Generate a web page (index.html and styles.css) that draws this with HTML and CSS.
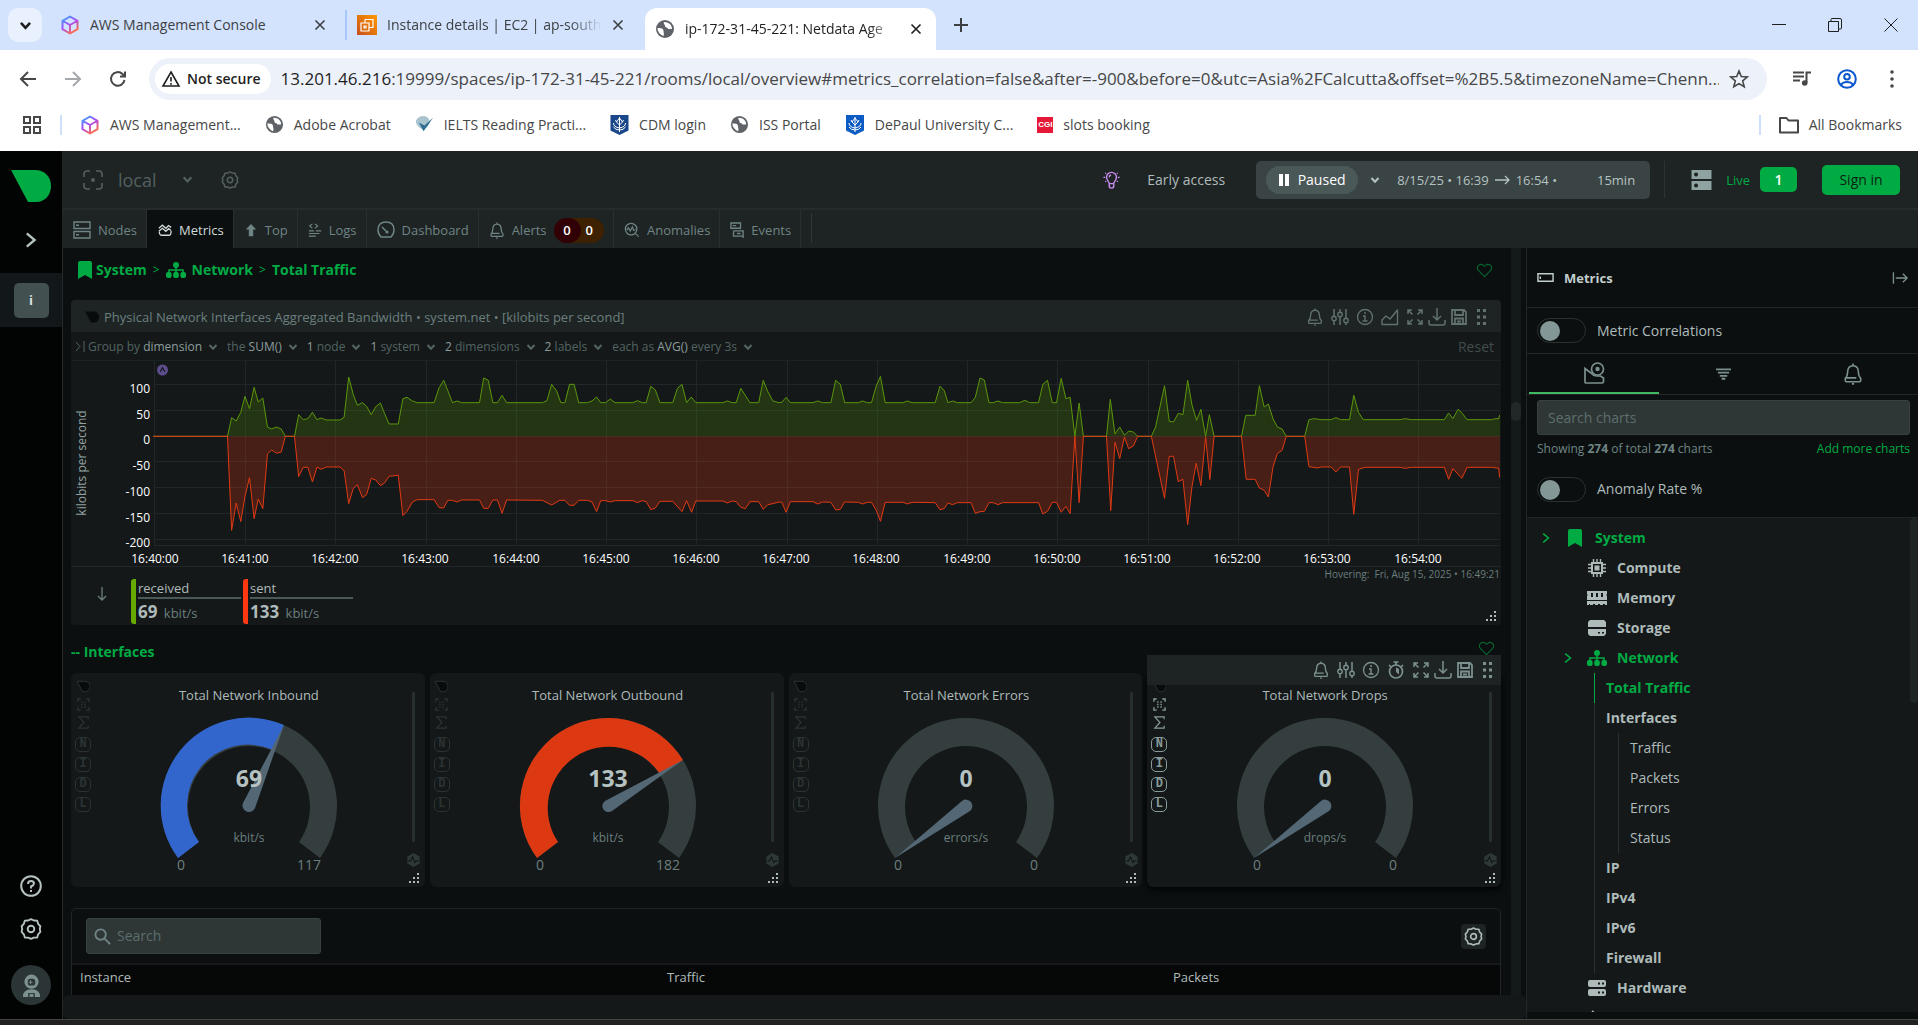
FILE: index.html
```html
<!DOCTYPE html>
<html lang="en">
<head>
<meta charset="utf-8">
<title>ip-172-31-45-221: Netdata Agent</title>
<link rel="stylesheet" href="styles.css">
</head>
<body>
<svg class="sprite" aria-hidden="true">
  <defs>
    <linearGradient id="awsg" x1="0" y1="0" x2="0.6" y2="1"><stop offset="0" stop-color="#2bb8f5"/><stop offset=".5" stop-color="#a44bff"/><stop offset="1" stop-color="#ff6a4d"/></linearGradient>
    <linearGradient id="ec2g" x1="0" y1="1" x2="1" y2="0"><stop offset="0" stop-color="#c8511b"/><stop offset="1" stop-color="#f90"/></linearGradient>
    <symbol id="aws" viewBox="0 0 20 20"><path d="M10 1.5 17.5 5.8v8.4L10 18.5 2.500 14.200V5.800z M3 6l7 4 7-4 M10 10v8" fill="none" stroke="url(#awsg)" stroke-width="2" stroke-linejoin="round"/></symbol>
    <symbol id="ec2" viewBox="0 0 20 20"><path d="M0 0h20v20H0z" fill="url(#ec2g)"/><path d="M4 8h8v8H4zM8 4.500h8v8h-4M8 8V4.500M7 11h2v2H7z" fill="none" stroke="#fff" stroke-width="1.200"/></symbol>
    <symbol id="globe" viewBox="0 0 20 20"><circle cx="10" cy="10" r="9" fill="#5f6368"/><path d="M2.500 9c3 0 6 0 6 3 0 2 1 2 0 5-3-1-6-4-6-8zM9 3c-1 2 1 2 1 4s3 1 3 3h4c0-4-3-7-8-7z" fill="#fff"/></symbol>
    <symbol id="check" viewBox="0 0 20 20"><path d="M1 6c2-6 12-7 14-1s-5 10-7 10S0 10 1 6z" fill="#a9c3cf"/><path d="M4 8l5 9L19 3l-9 8z" fill="#2d6f93"/></symbol>
    <symbol id="crest" viewBox="0 0 18 20"><path d="M0 0h18v15q0 1-2 1.500L9 20l-7-3.500Q0 16 0 15z" fill="currentColor"/><path d="M9 2v15M9 3L6 7l3 3 3-3zM3 8q0 4 6 5 6-1 6-5M3 12q2 3 6 3t6-3M5 5l1 2M13 5l-1 2" fill="none" stroke="#fff" stroke-width="1"/></symbol>
    <symbol id="x" viewBox="0 0 12 12"><path d="M1.500 1.500l9 9M10.500 1.500l-9 9" stroke="currentColor" stroke-width="1.600" fill="none"/></symbol>
    <symbol id="down" viewBox="0 0 10 10"><path d="M1.500 3L5 6.800 8.500 3" fill="none" stroke="currentColor" stroke-width="2"/></symbol>
    <symbol id="right" viewBox="0 0 10 14"><path d="M1.500 1.500L8 7l-6.500 5.500" fill="none" stroke="currentColor" stroke-width="2"/></symbol>
    <symbol id="back" viewBox="0 0 20 20"><path d="M18 10H3M10 3l-7 7 7 7" fill="none" stroke="currentColor" stroke-width="2"/></symbol>
    <symbol id="reload" viewBox="0 0 20 20"><path d="M16.500 11a6.800 6.800 0 1 1-2-6l2 2M17 2.500V7.500h-5" fill="none" stroke="currentColor" stroke-width="2"/></symbol>
    <symbol id="warn" viewBox="0 0 20 20"><path d="M10 3l8 14H2zM10 8v4.500M10 14v1.700" fill="none" stroke="currentColor" stroke-width="1.600"/></symbol>
    <symbol id="star" viewBox="0 0 20 20"><path d="M10 2l2.300 5.500 6 .5-4.600 3.900 1.500 5.900L10 14.600l-5.200 3.200 1.500-5.900L1.700 8l6-.5z" fill="none" stroke="currentColor" stroke-width="1.600"/></symbol>
    <symbol id="queue" viewBox="0 0 20 20"><path d="M1 3.500h11M1 7.500h11M1 11.500h7M14.500 14V3.500H19" fill="none" stroke="currentColor" stroke-width="2"/><circle cx="12.700" cy="14" r="2.800" fill="currentColor"/></symbol>
    <symbol id="user" viewBox="0 0 20 20"><circle cx="10" cy="10" r="8.800" fill="none" stroke="currentColor" stroke-width="2"/><circle cx="10" cy="7.800" r="2.800" fill="none" stroke="currentColor" stroke-width="2"/><path d="M4 16c2-4 10-4 12 0" fill="none" stroke="currentColor" stroke-width="2"/></symbol>
    <symbol id="more" viewBox="0 0 20 20"><circle cx="10" cy="3" r="1.800"/><circle cx="10" cy="10" r="1.800"/><circle cx="10" cy="17" r="1.800"/></symbol>
    <symbol id="apps" viewBox="0 0 20 20"><path d="M2 2h6v6H2zM12 2h6v6h-6zM2 12h6v6H2zM12 12h6v6h-6z" fill="none" stroke="currentColor" stroke-width="2"/></symbol>
    <symbol id="folder" viewBox="0 0 20 18"><path d="M1 2h6.500l2 2.500H19V16.500H1z" fill="none" stroke="currentColor" stroke-width="2" stroke-linejoin="round"/></symbol>
    <symbol id="leaf" viewBox="0 0 40 32"><path d="M0 0h24c10 0 16 7 16 16s-6 16-15 16h-8z"/></symbol>
    <symbol id="space" viewBox="0 0 20 20"><path d="M1 7V4q0-3 3-3h3M13 1h3q3 0 3 3v3M19 13v3q0 3-3 3h-3M7 19H4q-3 0-3-3v-3" fill="none" stroke="currentColor" stroke-width="1.600"/><circle cx="10" cy="10" r="2"/></symbol>
    <symbol id="gear" viewBox="0 0 20 20"><path d="M10 1l2.600 1.300 3 .1.900 2.900 2 2.200L18 10l.5 2.600-2 2.200-.9 2.900-3 .1L10 19l-2.600-1.200-3-.1-.9-2.900-2-2.200L2 10l-.5-2.500 2-2.200.9-2.900 3-.1z" fill="none" stroke="currentColor" stroke-width="1.700" stroke-linejoin="round"/><circle cx="10" cy="10" r="3" fill="none" stroke="currentColor" stroke-width="1.700"/></symbol>
    <symbol id="nodes" viewBox="0 0 18 18"><path d="M1 1h16v6.500H1zM1 10.500h16V17H1zM3 4.300h3M3 13.800h3" fill="none" stroke="currentColor" stroke-width="1.400"/></symbol>
    <symbol id="waves" viewBox="0 0 16 16"><path d="M1 6l4-3.500L9 6l3-3 3 2M1 9.500L5 6l4 3.500 3-3 3 2M1.500 10q0 4 3 4h8q2.500 0 2.500-5" fill="none" stroke="currentColor" stroke-width="1.500"/></symbol>
    <symbol id="up" viewBox="0 0 16 16"><path d="M8 1l6 6.500h-3.500V15h-5V7.500H2z"/></symbol>
    <symbol id="logs" viewBox="0 0 16 16"><path d="M5 1L2 3.500 5 6M8 1l3 2.500L8 6M1 9h6M9 9h6M1 12h12M1 15h8" fill="none" stroke="currentColor" stroke-width="1.300"/></symbol>
    <symbol id="dash" viewBox="0 0 18 18"><path d="M4 16q-3-3-3-7 0-8 8-8t8 8q0 4-3 7zM5 6l4 4" fill="none" stroke="currentColor" stroke-width="1.500"/><circle cx="10" cy="11" r="1.600"/></symbol>
    <symbol id="bell" viewBox="0 0 18 20"><path d="M9 2.500c-4 0-5 3.500-5 6.500 0 2-.5 3.500-2 5V16q0 1 1 1h12q1 0 1-1v-2c-1.500-1.500-2-3-2-5 0-3-1-6.500-5-6.500zM9 2.500V.5M2.500 13.500H12M8 19h2" fill="none" stroke="currentColor" stroke-width="1.500"/></symbol>
    <symbol id="anom" viewBox="0 0 18 18"><circle cx="8" cy="8" r="6.500" fill="none" stroke="currentColor" stroke-width="1.400"/><path d="M12.500 12.500l4 4M3 9l2-2.500L7 10l2.500-4.500 1.500 4 2-1" fill="none" stroke="currentColor" stroke-width="1.400"/></symbol>
    <symbol id="events" viewBox="0 0 16 18"><path d="M1 1h11v6H1zM3 8V7M4 10h11v6.500M4 10v6h11v2M3 4h4M8 13h4" fill="none" stroke="currentColor" stroke-width="1.500"/></symbol>
    <symbol id="bulb" viewBox="0 0 18 20"><path d="M6.500 14c0-2-3-3.500-3-7a5.500 5.500 0 0 1 11 0c0 3.500-3 5-3 7zM6.500 14v3q0 2 2.500 2t2.500-2v-3M6.500 7q0-2 2-2.500" fill="none" stroke="currentColor" stroke-width="1.600"/><path d="M0 7h2M16 7h2M2 2l1 1M16 2l-1 1M2 12l1-1M16 12l-1-1" stroke="currentColor" stroke-width="1.300"/></symbol>
    <symbol id="server" viewBox="0 0 20 20"><path fill-rule="evenodd" d="M0 0h20v9H0zM4.500 2.500a2 2 0 1 0 .1 0zM0 11h20v9H0zM4.500 13.500a2 2 0 1 0 .1 0z"/></symbol>
    <symbol id="mark" viewBox="0 0 14 18"><path d="M2 0h10q2 0 2 2v16l-7-4-7 4V2q0-2 2-2z"/></symbol>
    <symbol id="net" viewBox="0 0 20 16"><circle cx="10" cy="3" r="3"/><rect x="0" y="10" width="5.600" height="6" rx="2"/><rect x="7.200" y="10" width="5.600" height="6" rx="2"/><rect x="14.400" y="10" width="5.600" height="6" rx="2"/><path d="M10 5v6M3 11V8h14v3" fill="none" stroke="currentColor" stroke-width="1.500"/></symbol>
    <symbol id="heart" viewBox="0 0 18 16"><path d="M9 14.500L2.500 8C-.5 4 4 -.5 8 2.500L9 3.500l1-1C14-.5 18.500 4 15.500 8z" fill="none" stroke="currentColor" stroke-width="1.200"/></symbol>
    <symbol id="sliders" viewBox="0 0 18 18"><path d="M3 1v7M3 13v4M9 1v3M9 9v8M15 1v9M15 15v2" fill="none" stroke="currentColor" stroke-width="1.500"/><circle cx="3" cy="10.500" r="2.200" fill="none" stroke="currentColor" stroke-width="1.400"/><circle cx="9" cy="6.500" r="2.200" fill="none" stroke="currentColor" stroke-width="1.400"/><circle cx="15" cy="12.500" r="2.200" fill="none" stroke="currentColor" stroke-width="1.400"/></symbol>
    <symbol id="info" viewBox="0 0 18 18"><circle cx="9" cy="9" r="7.500" fill="none" stroke="currentColor" stroke-width="1.300"/><path d="M9 4v2M7 8h2v5M6.500 13h5" fill="none" stroke="currentColor" stroke-width="1.400"/></symbol>
    <symbol id="area" viewBox="0 0 18 18"><path d="M1 16.500V12l4-4 4 3 7.500-9v14.500z" fill="none" stroke="currentColor" stroke-width="1.400" stroke-linejoin="round"/></symbol>
    <symbol id="timer" viewBox="0 0 18 18"><circle cx="9" cy="10.500" r="6.500" fill="none" stroke="currentColor" stroke-width="1.700"/><path d="M9 6.500v4.500l3 2.500V8z"/><path d="M6.500 1h5M9 1v3M2 4l2 2M16 4l-2 2" stroke="currentColor" stroke-width="1.700"/></symbol>
    <symbol id="full" viewBox="0 0 18 18"><path d="M2 6V2h4M12 2h4v4M16 12v4h-4M6 16H2v-4M2 2l4.500 4.500M16 2l-4.500 4.500M16 16l-4.500-4.500M2 16l4.500-4.500" fill="none" stroke="currentColor" stroke-width="1.500"/></symbol>
    <symbol id="dl" viewBox="0 0 18 18"><path d="M9 0v12M5 8l4 4 4-4M1 12v3q0 2 2 2h12q2 0 2-2v-3" fill="none" stroke="currentColor" stroke-width="1.500"/></symbol>
    <symbol id="save" viewBox="0 0 18 18"><path d="M2 2h12l2 2v12H2zM5 2v5h8V2M5 16v-5.500h8V16M7 13.500h4" fill="none" stroke="currentColor" stroke-width="1.800"/></symbol>
    <symbol id="grip" viewBox="0 0 18 18"><path d="M5 1h3v3H5zM11 1h3v3h-3zM5 7.500h3v3H5zM11 7.500h3v3h-3zM5 14h3v3H5zM11 14h3v3h-3z"/></symbol>
    <symbol id="size" viewBox="0 0 12 12"><path d="M9 0h2v2H9zM9 4h2v2H9zM9 8h2v2H9zM5 4h2v2H5zM5 8h2v2H5zM1 8h2v2H1z"/></symbol>
    <symbol id="scan" viewBox="0 0 14 14"><path d="M1 4V1h3M10 1h3v3M13 10v3h-3M4 13H1v-3" fill="none" stroke="currentColor" stroke-width="1.500"/><path d="M4.500 3.500H6V5H4.500zM8 3.500h1.500V5H8zM4.500 6.300H6v1.500H4.500zM8 6.300h1.500v1.500H8zM4.500 9H6v1.500H4.500zM8 9h1.500v1.500H8z"/></symbol>
    <symbol id="sigma" viewBox="0 0 14 14"><path d="M12 3.500V1H2l5.500 6L2 13h10v-2.500" fill="none" stroke="currentColor" stroke-width="1.300"/></symbol>
    <symbol id="pulse" viewBox="0 0 14 16"><path d="M7 0l7 4v8l-7 4-7-4V4z"/><path d="M1 9h2.500L6 4.500 8.500 11l1.500-2h3" fill="none" stroke="#141819" stroke-width="1.300"/></symbol>
    <symbol id="spot" viewBox="0 0 12 12"><circle cx="6" cy="6" r="6"/><path d="M3.500 8L6 3.500 8.500 8" fill="none" stroke="#141819" stroke-width="1.300"/></symbol>
    <symbol id="panel" viewBox="0 0 18 10"><path d="M1 1h16v8H1zM3.500 4v2.500" fill="none" stroke="currentColor" stroke-width="1.500"/></symbol>
    <symbol id="out" viewBox="0 0 18 14"><path d="M1.500 1v12M4 7h12M11.500 2.500L16 7l-4.500 4.500" fill="none" stroke="currentColor" stroke-width="1.400"/></symbol>
    <symbol id="charts" viewBox="0 0 22 22"><circle cx="14.500" cy="7" r="6" fill="none" stroke="currentColor" stroke-width="1.700"/><circle cx="14.500" cy="7" r="2.200"/><path d="M8 11L2 6.500V20q0 1 1 1h16q1.500 0 1.500-1.500V16l-3-2h-4q-3 0-5.500-3" fill="none" stroke="currentColor" stroke-width="1.700"/></symbol>
    <symbol id="filter" viewBox="0 0 16 12"><path d="M0 0h16v2H0zM2 3.500h12v2H2zM4 7h8v2H4zM6 10h4v2H6z"/></symbol>
    <symbol id="cpu" viewBox="0 0 18 18"><path fill-rule="evenodd" d="M3 3h12v12H3zM5 5v8h8V5z"/><path d="M6.500 6.500h5v5h-5z"/><path d="M5.500 0v3M9 0v3M9 15v3M12.500 0v3M12.500 15v3M5.500 15v3M0 5.500h3M0 9h3M0 12.500h3M15 5.500h3M15 9h3M15 12.500h3" stroke="currentColor" stroke-width="1.400"/></symbol>
    <symbol id="ram" viewBox="0 0 20 14"><path fill-rule="evenodd" d="M0 0h20v3q-1.500 1 0 2v4H0V5q1.500-1 0-2zM4 2v4h2V2zM9 2v4h2V2zM14 2v4h2V2zM0 10h20v4h-2v-1h-2v1h-3v-1h-2v1H8v-1H6v1H3v-1H2v1H0z"/></symbol>
    <symbol id="disk" viewBox="0 0 18 16"><path fill-rule="evenodd" d="M2 0h14l2 2v5H0V2zM0 9h18v5l-2 2H2l-2-2zM10 12v1.500h2V12zM14 12v1.500h2V12z"/></symbol>
    <symbol id="hard" viewBox="0 0 18 16"><path fill-rule="evenodd" d="M2 0h14q2 0 2 2v3q0 2-2 2H2q-2 0-2-2V2q0-2 2-2zM10 2.500v2h2v-2zM14 2.500v2h2v-2zM2 9h14q2 0 2 2v3q0 2-2 2H2q-2 0-2-2v-3q0-2 2-2zM10 11.500v2h2v-2zM14 11.500v2h2v-2z"/></symbol>
    <symbol id="list" viewBox="0 0 18 16"><path d="M0 3l2 2 3.500-4M8 3h10M0 9l2 2 3.500-4M8 9h10" fill="none" stroke="currentColor" stroke-width="1.900"/></symbol>
    <symbol id="help" viewBox="0 0 22 22"><circle cx="11" cy="11" r="9.800" fill="none" stroke="currentColor" stroke-width="2"/><path d="M8 9q0-3 3-3t3 2.500Q14 10 11 11.500V13.500M11 15v2" fill="none" stroke="currentColor" stroke-width="2"/></symbol>
    <symbol id="astro" viewBox="0 0 20 24"><circle cx="10" cy="8" r="7.500"/><path d="M1 24q0-8 9-8t9 8z"/><rect x="6" y="5" width="8" height="7" rx="3" fill="#2b3535"/><path d="M9 6.500v4M7 8.500h4" stroke="#7c9190"/><path d="M6.500 20h7v4h-7z" fill="#2b3535"/><path d="M8 21h4v3H8z"/></symbol>
    <symbol id="search" viewBox="0 0 18 18"><circle cx="7" cy="7" r="5.500" fill="none" stroke="currentColor" stroke-width="2"/><path d="M11 11l6 6" stroke="currentColor" stroke-width="2"/></symbol>
    <g id="dial"><path d="M-71 52A88 88 0 1 1 71 52L50 36A61 61 0 1 0-50 36z" fill="#353e3e"/></g>
  </defs>
</svg>

<header class="chrome">
  <div class="strip">
    <button class="tabmenu" aria-label="Search tabs"><svg width="13" height="13"><use href="#down"/></svg></button>
    <div class="btab"><svg width="20" height="20"><use href="#aws"/></svg><span>AWS Management Console</span><button aria-label="Close"><svg width="12" height="12"><use href="#x"/></svg></button></div>
    <div class="btab sep"><svg width="20" height="20"><use href="#ec2"/></svg><span class="fade">Instance details | EC2 | ap-south</span><button aria-label="Close"><svg width="12" height="12"><use href="#x"/></svg></button></div>
    <div class="btab on"><svg width="20" height="20"><use href="#globe"/></svg><span class="fade">ip-172-31-45-221: Netdata Age</span><button aria-label="Close"><svg width="12" height="12"><use href="#x"/></svg></button></div>
    <button class="newtab" aria-label="New tab"><svg width="14" height="14" viewBox="0 0 14 14"><path d="M7 0v14M0 7h14" stroke="currentColor" stroke-width="2"/></svg></button>
    <div class="win">
      <button aria-label="Minimise"><svg width="14" height="14" viewBox="0 0 14 14"><path d="M0 6.500h14" stroke="currentColor"/></svg></button>
      <button aria-label="Restore"><svg width="14" height="14" viewBox="0 0 14 14"><path d="M.5 3.500h10v10H.5zM3 3V1.500Q3 .5 4 .5h8q1.500 0 1.500 1.500v8q0 1-1 1H11" fill="none" stroke="currentColor"/></svg></button>
      <button aria-label="Close window"><svg width="14" height="14" viewBox="0 0 14 14"><path d="M.5.5l13 13M13.500.5l-13 13" stroke="currentColor"/></svg></button>
    </div>
  </div>
  <div class="bar">
    <button aria-label="Back"><svg width="20" height="20"><use href="#back"/></svg></button>
    <button aria-label="Forward" class="dim flip"><svg width="20" height="20"><use href="#back"/></svg></button>
    <button aria-label="Reload"><svg width="20" height="20"><use href="#reload"/></svg></button>
    <div class="omni">
      <button class="secure"><svg width="20" height="20"><use href="#warn"/></svg>Not secure</button>
      <span class="url"><b>13.201.46.216</b>:19999/spaces/ip-172-31-45-221/rooms/local/overview#metrics_correlation=false&amp;after=-900&amp;before=0&amp;utc=Asia%2FCalcutta&amp;offset=%2B5.5&amp;timezoneName=Chenn...</span>
      <button aria-label="Bookmark"><svg width="20" height="20"><use href="#star"/></svg></button>
    </div>
    <button aria-label="Media"><svg width="20" height="20"><use href="#queue"/></svg></button>
    <button aria-label="Profile" class="blue"><svg width="20" height="20"><use href="#user"/></svg></button>
    <button aria-label="Menu"><svg width="20" height="20"><use href="#more"/></svg></button>
  </div>
  <nav class="marks">
    <button aria-label="Apps"><svg width="20" height="20"><use href="#apps"/></svg></button><i></i>
    <a href="#"><svg width="20" height="20"><use href="#aws"/></svg>AWS Management...</a>
    <a href="#"><svg width="19" height="19"><use href="#globe"/></svg>Adobe Acrobat</a>
    <a href="#"><svg width="19" height="19"><use href="#check"/></svg>IELTS Reading Practi...</a>
    <a href="#"><svg class="navy" width="19" height="20"><use href="#crest"/></svg>CDM login</a>
    <a href="#"><svg width="19" height="19"><use href="#globe"/></svg>ISS Portal</a>
    <a href="#"><svg class="azure" width="20" height="20"><use href="#crest"/></svg>DePaul University C...</a>
    <a href="#"><em>CGI</em>slots booking</a>
    <i class="push"></i>
    <a href="#"><svg width="20" height="18"><use href="#folder"/></svg>All Bookmarks</a>
  </nav>
</header>

<div class="app">
  <aside class="rail">
    <svg class="logo" width="40" height="32"><use href="#leaf"/></svg>
    <button aria-label="Expand"><svg width="12" height="18"><use href="#right"/></svg></button>
    <div class="cur"><button>i</button></div>
    <button class="low" aria-label="Help"><svg width="22" height="22"><use href="#help"/></svg></button>
    <button aria-label="Settings"><svg width="22" height="22"><use href="#gear"/></svg></button>
    <button class="ava" aria-label="Account"><svg width="19" height="23"><use href="#astro"/></svg></button>
  </aside>

  <div class="main">
    <header class="top">
      <svg width="20" height="20"><use href="#space"/></svg>
      <button class="room">local<svg width="11" height="11"><use href="#down"/></svg></button>
      <button aria-label="Room settings"><svg width="18" height="18"><use href="#gear"/></svg></button>
      <a class="early" href="#"><svg width="17" height="18"><use href="#bulb"/></svg>Early access</a>
      <div class="time">
        <button class="pause"><svg width="10" height="12" viewBox="0 0 10 12"><path d="M0 0h4v12H0zM6 0h4v12H6z"/></svg>Paused</button>
        <button aria-label="Play options"><svg width="10" height="10"><use href="#down"/></svg></button>
        <button class="range">8/15/25 • 16:39 <svg width="15" height="10" viewBox="0 0 15 10"><path d="M0 5h14M10 1l4 4-4 4" fill="none" stroke="currentColor" stroke-width="1.300"/></svg> 16:54 •<span>15min</span></button>
      </div>
      <div class="live"><svg width="21" height="20"><use href="#server"/></svg><span>Live</span><b>1</b></div>
      <button class="sign">Sign in</button>
    </header>
    <nav class="tabs">
      <a href="#"><svg width="18" height="18"><use href="#nodes"/></svg>Nodes</a>
      <a href="#" class="on"><svg width="14" height="14"><use href="#waves"/></svg>Metrics</a>
      <a href="#"><svg width="14" height="14"><use href="#up"/></svg>Top</a>
      <a href="#"><svg width="14" height="14"><use href="#logs"/></svg>Logs</a>
      <a href="#"><svg width="18" height="18"><use href="#dash"/></svg>Dashboard</a>
      <a href="#"><svg width="16" height="17"><use href="#bell"/></svg>Alerts<span class="cnt"><b>0</b>0</span></a>
      <a href="#"><svg width="16" height="16"><use href="#anom"/></svg>Anomalies</a>
      <a href="#"><svg width="14" height="16"><use href="#events"/></svg>Events</a>
      <i></i>
    </nav>

    <div class="body">
      <div class="left">
        <main class="scroll">
          <h2 class="crumb"><svg width="14" height="18"><use href="#mark"/></svg><a href="#">System</a><span>&gt;</span><svg width="20" height="16"><use href="#net"/></svg><a href="#">Network</a><span>&gt;</span><a href="#">Total Traffic</a><svg class="fav" width="17" height="15"><use href="#heart"/></svg></h2>

          <section class="card">
            <div class="chead"><svg class="tiny" width="14" height="12"><use href="#leaf"/></svg><span>Physical Network Interfaces Aggregated Bandwidth • system.net • [kilobits per second]</span>
              <div class="tools"><svg><use href="#bell"/></svg><svg><use href="#sliders"/></svg><svg><use href="#info"/></svg><svg><use href="#area"/></svg><svg><use href="#full"/></svg><svg><use href="#dl"/></svg><svg><use href="#save"/></svg><svg><use href="#grip"/></svg></div></div>
            <div class="dims">
              <svg width="10" height="11" viewBox="0 0 10 11"><path d="M1 1l4 4.500L1 10M9 0v11" fill="none" stroke="currentColor"/></svg>
              <button>Group by <b>dimension</b><svg><use href="#down"/></svg></button>
              <button>the <b>SUM()</b><svg><use href="#down"/></svg></button>
              <button><b>1</b> node<svg><use href="#down"/></svg></button>
              <button><b>1</b> system<svg><use href="#down"/></svg></button>
              <button><b>2</b> dimensions<svg><use href="#down"/></svg></button>
              <button><b>2</b> labels<svg><use href="#down"/></svg></button>
              <button>each as <b>AVG()</b> every 3s<svg><use href="#down"/></svg></button>
              <button class="reset">Reset</button>
            </div>
            <svg class="plot" role="img" aria-label="Aggregated bandwidth">
              <path class="grid" d="M83.500 0v184M174.500 0v184M264.500 0v184M355.500 0v184M445.500 0v184M535.500 0v184M625.500 0v184M716.500 0v184M806.500 0v184M896.500 0v184M986.500 0v184M1077.500 0v184M1167.500 0v184M1257.500 0v184M1347.500 0v184M83 23.500h1346M83 49.500h1346M83 75.500h1346M83 100.500h1346M83 126.500h1346M83 152.500h1346M83 178.500h1346M83 184.500h1346"/>
              <svg width="708" height="200">
                <polyline class="rx" transform="translate(-12 -11) scale(.4591 .3333)" points="205,259 367,259 376,203 386,213 396,187 405,139 415,176 425,112 434,156 444,144 454,231 463,237 474,231 484,237 493,259 513,259 522,194 532,209 542,206 552,187 562,209 571,204 582,210 612,210 621,202 631,81 641,134 650,166 661,158 670,169 680,194 690,170 700,159 709,190 719,222 739,222 749,146 758,142 770,153 780,158 817,158 828,113 838,91 847,122 857,158 867,153 877,158 916,158 925,84 935,91 945,158 955,158 965,136 975,158 1053,158 1063,152 1073,103 1084,123 1093,158 1102,158 1112,103 1122,103 1132,158 1151,158 1161,153 1171,141 1180,158 1190,158 1201,147 1211,158 1250,158 1260,152 1270,158 1279,158 1289,109 1299,120 1309,158 1337,158 1347,115 1357,103 1367,158 1377,141 1387,158 1446,158 1456,153 1466,158 1475,158 1485,115 1505,158 1524,158 1534,91 1544,125 1555,153 1568,158 1578,158 1578,259"/>
                <polyline class="tx" transform="translate(-12 -11) scale(.4591 .3333)" points="205,259 367,259 376,541 386,459 396,515 405,440 415,383 425,506 434,447 444,476 454,312 463,300 474,310 484,306 493,259 513,259 522,380 532,352 542,352 552,396 562,351 571,358 582,351 612,351 621,362 631,461 641,415 650,404 661,443 670,434 680,385 690,390 700,407 709,399 719,379 739,376 749,497 758,484 770,456 780,449 817,449 828,473 838,474 847,451 857,451 867,456 877,450 916,450 925,475 935,475 945,450 955,450 965,490 975,450 1053,451 1073,465 1091,451 1102,451 1112,466 1122,466 1132,451 1151,451 1161,456 1171,485 1180,452 1190,452 1201,456 1211,452 1250,452 1260,458 1270,452 1279,455 1289,479 1299,474 1309,454 1337,454 1357,485 1367,452 1378,487 1387,453 1446,453 1456,459 1466,453 1475,455 1485,472 1495,476 1505,455 1524,455 1534,478 1544,464 1555,461 1568,456 1578,456 1578,259"/>
              </svg>
              <svg x="708" width="721" height="200">
                <polyline class="rx" transform="translate(0 -11) scale(.4719 .3333)" points="-10,259 -10,158 6,157 15,142 24,158 72,158 82,153 92,158 110,158 120,91 130,103 139,158 168,158 177,153 187,158 196,158 206,108 215,79 225,158 263,158 272,153 282,158 331,158 341,109 350,121 358,158 368,153 378,158 407,158 416,142 426,84 435,90 445,158 454,158 464,153 474,158 510,158 521,151 531,158 550,158 559,103 569,91 579,158 588,158 598,85 608,146 617,142 627,259 636,159 645,259 694,259 702,148 712,252 722,231 732,256 741,243 751,246 760,259 789,259 798,231 817,107 827,214 836,216 846,190 856,194 866,91 875,164 885,211 894,178 904,259 912,194 922,259 980,259 989,196 1009,196 1018,107 1028,171 1037,162 1047,207 1056,231 1066,237 1075,259 1114,259 1123,209 1133,206 1150,209 1170,209 1180,203 1190,209 1209,209 1218,136 1228,187 1238,209 1316,209 1327,206 1340,209 1410,209 1419,189 1428,206 1439,178 1448,190 1458,209 1510,209 1518,206 1525,206 1527,196 1540,196 1540,259"/>
                <polyline class="tx" transform="translate(0 -11) scale(.4719 .3333)" points="-10,259 -10,455 6,457 15,487 24,455 72,455 82,462 92,456 110,457 120,480 130,478 139,456 168,457 177,462 187,457 196,457 206,481 215,514 225,457 263,457 272,462 282,457 331,458 341,479 350,476 358,459 368,464 378,458 407,458 416,490 426,485 435,484 445,458 454,458 464,464 474,458 550,458 559,492 569,484 579,457 588,457 598,487 608,469 617,491 627,259 636,458 645,259 694,259 703,482 712,277 722,326 732,261 741,296 751,288 760,259 789,259 817,445 827,319 836,319 846,395 856,388 866,524 875,411 884,340 894,407 904,261 913,389 922,259 980,259 990,388 1009,388 1018,414 1028,421 1037,441 1047,350 1056,311 1066,301 1075,259 1114,259 1123,350 1140,354 1150,351 1170,351 1180,366 1190,351 1209,351 1218,493 1228,358 1242,352 1316,352 1327,355 1340,352 1410,352 1419,388 1428,356 1447,385 1458,352 1510,352 1525,355 1527,382 1540,382 1540,259"/>
              </svg>
              <svg class="spot" x="86" y="3" width="11" height="12"><use href="#spot"/></svg>
              <text class="unit" transform="translate(15 102) rotate(-90)">kilobits per second</text>
              <g class="ys"><text x="79" y="32">100</text><text x="79" y="58">50</text><text x="79" y="83">0</text><text x="79" y="109">-50</text><text x="79" y="135">-100</text><text x="79" y="161">-150</text><text x="79" y="186">-200</text></g>
              <g class="xs"><text x="84" y="202">16:40:00</text><text x="174" y="202">16:41:00</text><text x="264" y="202">16:42:00</text><text x="354" y="202">16:43:00</text><text x="445" y="202">16:44:00</text><text x="535" y="202">16:45:00</text><text x="625" y="202">16:46:00</text><text x="715" y="202">16:47:00</text><text x="805" y="202">16:48:00</text><text x="896" y="202">16:49:00</text><text x="986" y="202">16:50:00</text><text x="1076" y="202">16:51:00</text><text x="1166" y="202">16:52:00</text><text x="1256" y="202">16:53:00</text><text x="1347" y="202">16:54:00</text></g>
            </svg>
            <div class="legend">
              <svg class="arr" width="12" height="14" viewBox="0 0 12 14"><path d="M6 0v13M2 9l4 4 4-4" fill="none" stroke="currentColor" stroke-width="1.300"/></svg>
              <div class="dim1 g"><span>received</span><p><b>69</b> kbit/s</p></div>
              <div class="dim1 r"><span>sent</span><p><b>133</b> kbit/s</p></div>
              <div class="hov">Hovering:&nbsp; Fri, Aug 15, 2025 • 16:49:21</div>
              <svg class="grab" width="12" height="12"><use href="#size"/></svg>
            </div>
          </section>

          <h3 class="sub">-- Interfaces<svg class="fav" width="17" height="15"><use href="#heart"/></svg></h3>

          <div class="gauges">
            <section class="gauge">
              <div class="side"><svg class="ol"><use href="#leaf"/></svg><svg><use href="#scan"/></svg><svg><use href="#sigma"/></svg><b>N</b><b>I</b><b>D</b><b>L</b></div>
              <div class="mid"><h4>Total Network Inbound</h4>
                <svg width="180" height="170" viewBox="-90 -92 180 170"><use href="#dial"/><path d="M-71 52A88 88 0 0 1 35-81L24-56A61 61 0 0 0-50 36z" fill="#36c"/><path class="nd" d="M35-81L6 2A6 6 0 1 1-6-3z"/><text class="v" y="-19">69</text><text class="u" y="36">kbit/s</text><text class="m" x="-68" y="64">0</text><text class="m" x="60" y="64">117</text></svg></div>
              <div class="end"><i></i><svg width="13" height="14"><use href="#pulse"/></svg><svg class="grab" width="12" height="12"><use href="#size"/></svg></div>
            </section>
            <section class="gauge">
              <div class="side"><svg class="ol"><use href="#leaf"/></svg><svg><use href="#scan"/></svg><svg><use href="#sigma"/></svg><b>N</b><b>I</b><b>D</b><b>L</b></div>
              <div class="mid"><h4>Total Network Outbound</h4>
                <svg width="180" height="170" viewBox="-90 -92 180 170"><use href="#dial"/><path d="M-71 52A88 88 0 1 1 75-46L52-32A61 61 0 1 0-50 36z" fill="#dc3912"/><path class="nd" d="M75-46L4 5A6 6 0 1 1-3-5z"/><text class="v" y="-19">133</text><text class="u" y="36">kbit/s</text><text class="m" x="-68" y="64">0</text><text class="m" x="60" y="64">182</text></svg></div>
              <div class="end"><i></i><svg width="13" height="14"><use href="#pulse"/></svg><svg class="grab" width="12" height="12"><use href="#size"/></svg></div>
            </section>
            <section class="gauge">
              <div class="side"><svg class="ol"><use href="#leaf"/></svg><svg><use href="#scan"/></svg><svg><use href="#sigma"/></svg><b>N</b><b>I</b><b>D</b><b>L</b></div>
              <div class="mid"><h4>Total Network Errors</h4>
                <svg width="180" height="170" viewBox="-90 -92 180 170"><use href="#dial"/><path class="nd" d="M-71 52L-4-5A6 6 0 1 1 4 5z"/><text class="v" y="-19">0</text><text class="u" y="36">errors/s</text><text class="m" x="-68" y="64">0</text><text class="m" x="68" y="64">0</text></svg></div>
              <div class="end"><i></i><svg width="13" height="14"><use href="#pulse"/></svg><svg class="grab" width="12" height="12"><use href="#size"/></svg></div>
            </section>
            <section class="gauge hot">
              <div class="tools over"><svg><use href="#bell"/></svg><svg><use href="#sliders"/></svg><svg><use href="#info"/></svg><svg><use href="#timer"/></svg><svg><use href="#full"/></svg><svg><use href="#dl"/></svg><svg><use href="#save"/></svg><svg><use href="#grip"/></svg></div>
              <div class="side"><svg class="ol"><use href="#leaf"/></svg><svg><use href="#scan"/></svg><svg><use href="#sigma"/></svg><b>N</b><b>I</b><b>D</b><b>L</b></div>
              <div class="mid"><h4>Total Network Drops</h4>
                <svg width="180" height="170" viewBox="-90 -92 180 170"><use href="#dial"/><path class="nd" d="M-71 52L-4-5A6 6 0 1 1 4 5z"/><text class="v" y="-19">0</text><text class="u" y="36">drops/s</text><text class="m" x="-68" y="64">0</text><text class="m" x="68" y="64">0</text></svg></div>
              <div class="end"><i></i><svg width="13" height="14"><use href="#pulse"/></svg><svg class="grab" width="12" height="12"><use href="#size"/></svg></div>
            </section>
          </div>

          <section class="tbl">
            <div class="thead"><label class="find"><svg width="17" height="17"><use href="#search"/></svg><input type="text" placeholder="Search" aria-label="Search"></label><button aria-label="Table settings"><svg width="19" height="19"><use href="#gear"/></svg></button></div>
            <table><colgroup><col class="c1"><col class="c2"><col></colgroup><thead><tr><th>Instance</th><th>Traffic</th><th>Packets</th></tr></thead></table>
          </section>
        </main>
        <div class="split"><i></i></div>
        <footer class="foot"></footer>
      </div>

      <aside class="panel">
        <div class="ptitle"><svg width="17" height="11"><use href="#panel"/></svg>Metrics<button aria-label="Collapse"><svg width="17" height="14"><use href="#out"/></svg></button></div>
        <label class="tog"><input type="checkbox">Metric Correlations</label>
        <div class="ptabs"><button class="on" aria-label="Charts"><svg width="22" height="22"><use href="#charts"/></svg></button><button aria-label="Filters"><svg width="15" height="12"><use href="#filter"/></svg></button><button aria-label="Alerts"><svg width="22" height="22"><use href="#bell"/></svg></button></div>
        <div class="psearch"><input type="text" placeholder="Search charts" aria-label="Search charts"><p>Showing <b>274</b> of total <b>274</b> charts<a href="#">Add more charts</a></p></div>
        <label class="tog last"><input type="checkbox">Anomaly Rate %</label>
        <div class="tree">
          <ul>
            <li class="l0 on"><svg class="ch"><use href="#right"/></svg><svg width="14" height="18"><use href="#mark"/></svg><a href="#">System</a></li>
            <li class="l1"><svg class="ch"></svg><svg width="18" height="18"><use href="#cpu"/></svg><a href="#">Compute</a></li>
            <li class="l1"><svg class="ch"></svg><svg width="20" height="14"><use href="#ram"/></svg><a href="#">Memory</a></li>
            <li class="l1"><svg class="ch"></svg><svg width="18" height="16"><use href="#disk"/></svg><a href="#">Storage</a></li>
            <li class="l1 on"><svg class="ch"><use href="#right"/></svg><svg width="20" height="16"><use href="#net"/></svg><a href="#">Network</a></li>
          </ul>
          <ul class="kids">
            <li class="on"><a href="#">Total Traffic</a></li>
            <li><a href="#">Interfaces</a></li>
            <li class="nest"><ul><li><a href="#">Traffic</a></li><li><a href="#">Packets</a></li><li><a href="#">Errors</a></li><li><a href="#">Status</a></li></ul></li>
            <li><a href="#">IP</a></li><li><a href="#">IPv4</a></li><li><a href="#">IPv6</a></li><li><a href="#">Firewall</a></li>
          </ul>
          <ul>
            <li class="l1"><svg class="ch"></svg><svg width="18" height="16"><use href="#hard"/></svg><a href="#">Hardware</a></li>
            <li class="l1"><svg class="ch"></svg><svg width="18" height="16"><use href="#list"/></svg><a href="#">Processes</a></li>
          </ul>
          <i class="thumb"></i>
        </div>
      </aside>
    </div>
  </div>
</div>
</body>
</html>
```
FILE: styles.css
```css
* { box-sizing: border-box; margin: 0; padding: 0; }
html, body { height: 100%; }
body {
  display: flex; flex-direction: column; overflow: hidden;
  font-family: "Open Sans", "Noto Sans", sans-serif; font-size: 13px; line-height: 20px;
  color: #aebbba; background: #212121;
}
svg { fill: currentColor; flex: none; display: block; }
button, input { font: inherit; color: inherit; background: none; border: 0; }
button { cursor: pointer; display: flex; align-items: center; justify-content: center; white-space: nowrap; flex: none; }
a { color: inherit; text-decoration: none; }
ul { list-style: none; }
.sprite { position: absolute; width: 0; height: 0; }

/* browser frame */
.chrome { background: #fff; color: #474747; font-size: 14px; }
.strip { height: 50px; background: #d3e3fd; display: flex; align-items: center; color: #3c4043; }
.tabmenu { width: 34px; height: 34px; border-radius: 10px; background: #e9f1fe; margin: 0 8px; color: #1f1f1f; }
.btab { height: 30px; width: 295px; display: flex; align-items: center; gap: 10px; padding: 0 19px 0 10px; white-space: nowrap; }
.btab span { flex: 1; overflow: hidden; }
.fade { mask-image: linear-gradient(90deg, #000 85%, transparent); }
.btab button { width: 12px; height: 20px; }
.btab.sep { width: 300px; border-left: 2px solid #a8c7fa; padding-right: 21px; }
.btab.on { width: 291px; height: 42px; align-self: flex-end; background: #fff; border-radius: 12px 12px 0 0; color: #1f1f1f; padding-right: 14px; }
.newtab { width: 20px; height: 20px; margin-left: 15px; color: #3c4043; }
.win { margin-left: auto; display: flex; gap: 42px; padding-right: 20px; color: #1f1f1f; }
.bar { height: 58px; display: flex; align-items: center; padding: 0 16px 0 18px; gap: 25px; color: #474747; }
.bar > .omni { margin-left: -4px; }
.dim { color: #a5a8ab; }
.flip svg { transform: scaleX(-1); }
.blue { color: #0b57d0; }
.omni { flex: 1; min-width: 0; height: 42px; border-radius: 21px; background: #ecf1fa; display: flex; align-items: center; padding: 0 18px 0 6px; gap: 10px; font-size: 17px; }
.secure { height: 30px; border-radius: 15px; background: #fff; gap: 6px; padding: 0 10px 0 6px; font-size: 14px; font-weight: 600; color: #1f1f1f; }
.url { flex: 1; overflow: hidden; white-space: nowrap; line-height: 26px; }
.url b { font-weight: 400; color: #1f1f1f; }
.marks { height: 43px; display: flex; align-items: center; padding: 0 16px 10px 22px; gap: 24px; }
.marks a { display: flex; align-items: center; gap: 10px; white-space: nowrap; }
.marks i { width: 2px; height: 20px; background: #cfe0fc; margin: 0 -6px; }
.marks .push { margin-left: auto; }
.marks em { font: 700 8px/16px "Liberation Sans", sans-serif; background: #e51937; color: #fff; width: 16px; text-align: center; }
.navy { color: #1a478a; }
.azure { color: #0d5cc4; }

/* application shell */
.app { flex: 1; min-height: 0; display: flex; margin-bottom: 5px; border-bottom: 1px solid #444; background: #0b0f10; }
.rail { width: 62px; flex: none; background: #020303; display: flex; flex-direction: column; align-items: center; padding: 19px 0 14px; color: #b5c2c1; }
.logo { color: #00ab44; }
.rail > button { height: 22px; }
.rail > button:nth-of-type(1) { margin: 27px 0 22px; }
.cur { width: 62px; height: 54px; background: #12181a; display: flex; align-items: center; justify-content: center; }
.cur button { width: 35px; height: 35px; border-radius: 5px; background: #435050; font-weight: 700; color: #dde4e4; }
.rail .low { margin-top: auto; margin-bottom: 21px; }
.rail .ava { width: 40px; height: 40px; border-radius: 20px; background: #2b3535; color: #7c9190; margin-top: 25px; }
.main { flex: 1; min-width: 0; display: flex; flex-direction: column; border-left: 1px solid #232828; }

.top { height: 59px; flex: none; background: #1e2323; border-bottom: 2px solid #262c2c; display: flex; align-items: center; padding: 0 18px 0 20px; color: #536060; }
.room { font-size: 18px; gap: 25px; margin: 0 28px 0 15px; }
.early { margin-left: auto; display: flex; gap: 27px; align-items: center; color: #aebbba; font-size: 14px; }
.early svg { color: #c98cf0; }
.time { margin-left: 31px; width: 394px; height: 38px; background: #3a4444; border-radius: 5px; display: flex; align-items: center; padding: 0 15px 0 10px; gap: 12px; color: #b5c2c1; }
.pause { width: 92px; height: 28px; border-radius: 14px; background: #4b5858; gap: 9px; color: #fff; font-size: 14px; }
.range { flex: 1; gap: 6px; padding-left: 5px; }
.range span { margin-left: auto; }
.live { display: flex; align-items: center; gap: 14px; border-left: 1px solid #2c3333; height: 37px; margin-left: 14px; padding-left: 26px; color: #00ab44; }
.live svg { color: #8fa3a2; }
.live b { width: 37px; height: 25px; line-height: 25px; border-radius: 5px; background: #00ab44; color: #fff; text-align: center; font-size: 14px; font-weight: 600; }
.live span { margin-right: -4px; }
.sign { width: 78px; height: 30px; border-radius: 5px; background: #00ab44; color: #0b1f13; font-size: 14px; margin-left: 25px; }

.tabs { height: 38px; flex: none; display: flex; background: #1e2323; color: #6f8585; }
.tabs a { display: flex; align-items: center; gap: 7px; padding: 2px 9px 0 10px; border-right: 1px solid #2a3030; }
.tabs a.on { background: #0b0f10; color: #d0dad9; padding-left: 11px; }
.tabs > i { width: 1px; height: 30px; background: #2f3737; margin: 3px 0 0 10px; }
.cnt { display: flex; background: #3d2100; color: #fff; border-radius: 13px; height: 25px; line-height: 25px; padding-right: 11px; gap: 5px; font-weight: 600; }
.cnt b { width: 27px; text-align: center; background: #300006; border-radius: 13px; font-weight: 600; }

.body { flex: 1; min-height: 0; display: flex; }
.left { flex: 1; min-width: 0; display: grid; grid-template: 1fr 24px / 1fr 15px; }
.scroll { min-width: 0; overflow: hidden; padding: 0 10px 0 8px; }
.split { background: #14191a; width: 10px; }
.split i { display: block; width: 10px; height: 19px; border-radius: 5px; background: #222828; margin-top: 154px; }
.foot { grid-column: 1 / 3; background: #141819; border-radius: 6px; }

.crumb { height: 52px; display: flex; align-items: center; gap: 6px; padding: 0 8px 8px 7px; font-size: 14px; color: #00ab44; }
.crumb svg:first-child { margin-right: -2px; }
.crumb span { font-weight: 400; font-size: 12px; }
.fav { margin-left: auto; color: #076430; }

.card { background: #141819; border-radius: 4px; overflow: hidden; }
.chead { height: 32px; background: #1e2424; display: flex; align-items: center; gap: 5px; padding: 1px 11px 0 14px; color: #6b7f7e; white-space: nowrap; }
.chead > span { flex: 1; }
.tiny { color: #080b0c; }
.tools { display: flex; gap: 7px; color: #60716f; }
.tools svg { width: 18px; height: 18px; }
.tools svg:nth-child(n+6) { margin-left: -3px; }
.dims { height: 29px; display: flex; align-items: center; gap: 9px; padding: 1px 7px 0 4px; font-size: 12px; color: #536462; border-bottom: 1px solid #1c2122; }
.dims > svg { margin-right: -6px; }
.dims button svg { width: 10px; height: 10px; margin-left: 6px; }
.dims button { white-space: pre; }
.dims b { font-weight: 400; color: #8d9d9c; }
.dims .reset { margin-left: auto; font-size: 14px; color: #414c4b; }
.plot { width: 100%; height: 205px; overflow: visible; }
.grid { stroke: #20262a; fill: none; }
.plot polyline { stroke-width: 1px; vector-effect: non-scaling-stroke; }
.rx { stroke: #5c960c; fill: #66aa00; fill-opacity: .2; }
.tx { stroke: #e03a14; fill: #fe3912; fill-opacity: .22; }
.spot { color: #5d4d8c; }
.unit { text-anchor: middle; font-size: 12px; fill: #93a3a2; }
.ys, .xs { font-size: 12px; fill: #fff; }
.ys { text-anchor: end; }
.xs { text-anchor: middle; }
.legend { height: 59px; border-top: 1px solid #20262a; display: grid; grid-template: 1fr 14px / 60px 112px 112px 1fr; }
.legend > * { grid-row: 1 / 3; }
.arr { margin: 20px 0 0 25px; color: #6b7f7e; }
.dim1 { border-left: 5px solid; border-radius: 3px; height: 45px; margin-top: 12px; padding-left: 2px; }
.dim1 span { display: block; border-bottom: 2px solid #4a5857; color: #aebbba; height: 20px; line-height: 18px; margin-right: 2px; }
.dim1 p { color: #6b7f7e; line-height: 26px; }
.dim1 b { font-size: 17px; color: #aebbba; margin-right: 3px; }
.g { border-color: #6a0; }
.r { border-color: #fe3912; }
.legend .hov { grid-area: 1 / 4; text-align: right; font-size: 10px; line-height: 15px; color: #6b7f7e; padding-right: 1px; }
.legend .grab { grid-area: 2 / 4; justify-self: end; margin-right: 4px; }
.grab { color: #aebbba; }

.sub { height: 48px; display: flex; align-items: center; padding-top: 6px; font-size: 14px; color: #00ab44; }
.sub .fav { margin: 0 6px 8px auto; }
.gauges { display: grid; grid-template-columns: repeat(4, 1fr); gap: 5px; }
.gauge { position: relative; height: 214px; background: #141819; border-radius: 6px; display: grid; grid-template-columns: 24px 1fr 22px; }
.hot { box-shadow: 0 2px 6px #000; }
.side { color: #2b3333; padding: 7px 0 0; display: flex; flex-direction: column; gap: 5px; align-items: center; }
.side svg { width: 13px; height: 13px; }
.side .ol { stroke: #2b3333; stroke-width: 3px; fill: #090c0c; }
.side b { width: 16px; height: 15px; border: 1px solid; border-radius: 5px; font: 700 12px/13px "Liberation Mono", monospace; text-align: center; }
.side b:nth-of-type(1) { margin-top: 3px; }
.hot .side { color: #879b9a; }
.over { position: absolute; inset: -18px 0 auto 0; height: 30px; background: #1e2424; justify-content: flex-end; align-items: center; padding-right: 5px; color: #7c918f; }
.mid { display: flex; flex-direction: column; align-items: center; padding-top: 12px; }
.mid h4 { font-weight: 400; font-size: 13px; margin-bottom: 9px; }
.mid text { text-anchor: middle; }
.v { font-size: 23px; font-weight: 700; fill: #b5c2c1; }
.u { font-size: 12px; fill: #6b7f7e; }
.m { font-size: 14px; fill: #6b7f7e; }
.nd { fill: #536775; }
.end { display: flex; flex-direction: column; align-items: center; padding: 19px 0 0; color: #2f3838; }
.end i { width: 3px; height: 150px; background: #272e2e; border-radius: 1px; }
.end svg { margin-top: 11px; }
.end .grab { margin-top: 6px; }

.tbl { margin-top: 21px; border: 1px solid #1f2526; border-radius: 5px 5px 0 0; }
.thead { height: 54px; display: flex; align-items: center; justify-content: space-between; padding: 0 14px; }
.find { width: 235px; height: 36px; background: #2e3636; border: 1px solid #384040; border-radius: 3px; display: flex; align-items: center; gap: 6px; padding: 0 7px; color: #6f8585; font-size: 14px; }
.find input { width: 100%; outline: 0; }
::placeholder { color: #5c6e6d; opacity: 1; }
.thead button { width: 25px; height: 25px; background: #1e2424; border-radius: 4px; color: #aebbba; }
table { width: 100%; table-layout: fixed; border-collapse: collapse; background: #060808; border-top: 2px solid #16191b; }
th { text-align: left; font-weight: 400; font-size: 13px; padding: 1px 8px 0 8px; height: 60px; vertical-align: top; line-height: 22px; }
.c1 { width: 587px; }
.c2 { width: 506px; }

/* metrics side panel */
.panel { width: 392px; flex: none; border-left: 1px solid #20262a; display: flex; flex-direction: column; }
.ptitle { height: 60px; flex: none; display: flex; align-items: center; gap: 10px; padding: 0 9px 0 10px; border-bottom: 1px solid #20262a; font-weight: 700; color: #c3cecd; }
.ptitle button { margin-left: auto; color: #7c918f; }
.tog { height: 46px; flex: none; display: flex; align-items: center; gap: 11px; padding-left: 10px; font-size: 14px; border-bottom: 1px solid #20262a; }
.tog input { appearance: none; width: 49px; height: 25px; border: 1px solid #2a3131; border-radius: 13px; padding: 2px; }
.tog input::before { content: ""; display: block; width: 20px; height: 20px; border-radius: 10px; background: #839896; }
.tog.last { height: 57px; }
.ptabs { height: 41px; flex: none; display: grid; grid-template-columns: repeat(3, 1fr); border-bottom: 1px solid #20262a; color: #7c918f; padding-left: 2px; }
.ptabs .on { border-bottom: 2px solid #42b861; }
.psearch { flex: none; padding: 5px 8px 0 10px; height: 66px; font-size: 12px; color: #6f8585; }
.psearch input { display: block; width: 100%; height: 35px; background: #2e3636; border: 1px solid #384040; border-radius: 3px; padding: 0 10px; font-size: 14px; }
.psearch p { display: flex; line-height: 28px; white-space: pre; }
.psearch p a { margin-left: auto; color: #00ab44; }
.tree { flex: 1; min-height: 0; overflow: hidden; background: #141819; padding-top: 5px; margin-bottom: 7px; position: relative; font-size: 14px; font-weight: 700; }
.tree li { height: 30px; display: flex; align-items: center; }
.tree .on { color: #00ab44; }
.ch { width: 8px; height: 12px; }
.l0 { padding-left: 15px; gap: 13px; }
.l0 .ch { margin-right: 5px; }
.l1 { padding-left: 37px; gap: 10px; }
.l1 .ch { margin-right: 5px; }
.l1 svg + svg { width: 20px; }
.tree .kids { margin-left: 67px; }
.kids > li { border-left: 1px solid #283030; padding-left: 11px; }
.kids > .on { border-color: #00ab44; }
.tree .nest { height: 120px; padding-left: 23px; }
.nest li { border-left: 1px solid #283030; padding-left: 11px; font-weight: 400; }
.thumb { position: absolute; right: 0; top: 0; width: 8px; height: 185px; border-radius: 4px; background: #1e2424; }
```
